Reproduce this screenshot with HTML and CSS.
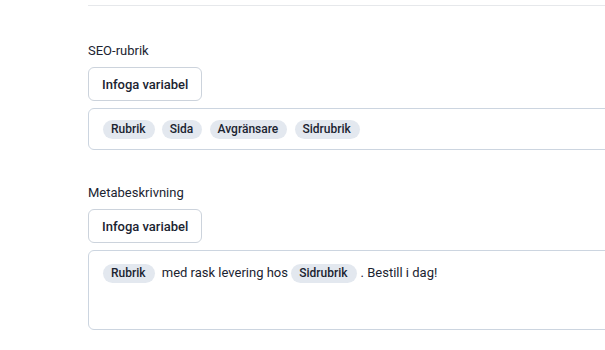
FILE: index.html
```html
<!DOCTYPE html>
<html lang="sv">
<head>
  <meta charset="UTF-8" />
  <title>SEO</title>
  <link rel="stylesheet" href="styles.css">
</head>
<body>
  <div class="page">
    <div class="panel">
      <div class="field">
        <label class="field-label">SEO-rubrik</label>
        <button class="insert-btn">Infoga variabel</button>
        <div class="editor single">
          <span class="chip">Rubrik</span>
          <span class="chip">Sida</span>
          <span class="chip">Avgränsare</span>
          <span class="chip">Sidrubrik</span>
        </div>
      </div>

      <div class="field">
        <label class="field-label">Metabeskrivning</label>
        <button class="insert-btn">Infoga variabel</button>
        <div class="editor multi">
          <span class="chip">Rubrik</span> med rask levering hos <span class="chip">Sidrubrik</span>. Bestill i dag!
        </div>
      </div>
    </div>
  </div>
</body>
</html>
```

FILE: styles.css
```css
body {
  margin: 0;
  background: #fff;
  font-family: Roboto, 'Open Sans', sans-serif;
  color: #1b2431;
}

.page {
  overflow: hidden;
  height: 350px;
}

.panel {
  margin: 5px -40px 0 88px;
  border-top: 1px solid #e6e8eb;
  padding-top: 36px;
}

.field {
  display: flex;
  flex-direction: column;
  align-items: flex-start;
  margin-bottom: 34px;
}

.field-label {
  font-size: 13px;
  line-height: 18px;
  margin-bottom: 7px;
}

.insert-btn {
  font-family: inherit;
  font-size: 13px;
  font-weight: 500;
  color: #1b2431;
  background: #fff;
  border: 1px solid #ccd3dc;
  border-radius: 6px;
  height: 34px;
  padding: 0 13px;
  margin-bottom: 7px;
}

.editor {
  align-self: stretch;
  border: 1px solid #ccd5e0;
  border-radius: 6px;
  padding: 10px 14px;
  font-size: 13px;
  line-height: 20px;
}

.editor.single {
  height: 20px;
}

.editor.multi {
  padding-top: 12px;
  height: 56px;
}

.chip {
  display: inline-block;
  background: #e3e8ef;
  border-radius: 10px;
  padding: 0 9px 0 8px;
  font-size: 12px;
  font-weight: 500;
  line-height: 19px;
  margin-right: 4px;
}
```
